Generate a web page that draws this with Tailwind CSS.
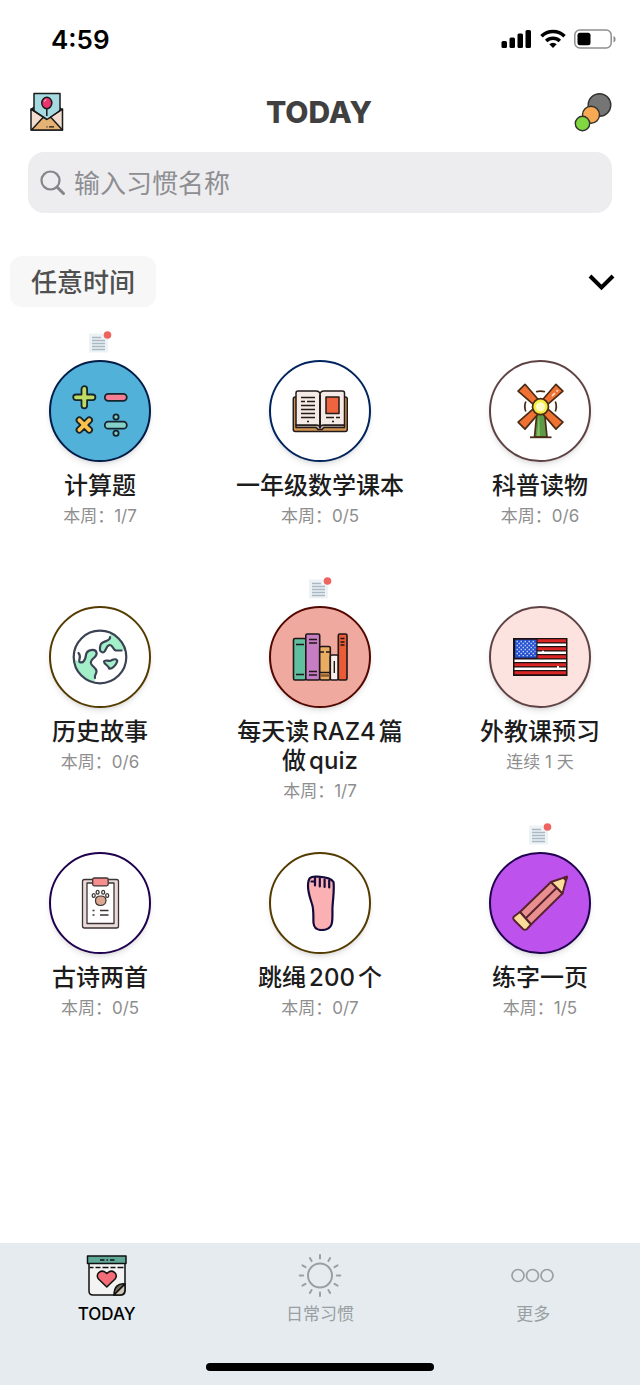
<!DOCTYPE html>
<html lang="zh-CN">
<head>
  <meta charset="UTF-8" />
  <meta name="viewport" content="width=device-width, initial-scale=1.0"/>
  <title>TODAY</title>
  <script src="https://cdn.jsdelivr.net/npm/@tailwindcss/browser@4"></script>
</head>
<body class="min-h-screen flex flex-col bg-white text-[#1c1c1c] font-['Inter','Noto_Sans_CJK_SC',sans-serif] [text-autospace:normal]">

  <!-- Status bar -->
  <div class="h-[78px] flex items-center justify-between pl-[51px] pr-6 text-black">
    <span class="text-[26px] font-semibold">4:59</span>
    <div class="flex items-center gap-2">
      <svg class="w-[31px] h-5" viewBox="0 0 31 20">
        <rect x="0.5" y="12" width="5.5" height="7" rx="1.5"/>
        <rect x="8.5" y="8.5" width="5.5" height="10.5" rx="1.5"/>
        <rect x="16.5" y="4.5" width="5.5" height="14.5" rx="1.5"/>
        <rect x="24.5" y="1" width="5.5" height="18" rx="1.5"/>
      </svg>
      <svg class="w-[26px] h-5" viewBox="0 0 26 20" fill="none" stroke="#000" stroke-width="3.6">
        <path d="M1.500 7.200a16.500 16.500 0 0 1 23 0"/>
        <path d="M6.200 12a9.800 9.800 0 0 1 13.600 0"/>
        <path d="M9.300 15.200a5.300 5.300 0 0 1 7.400 0L13 19z" fill="#000" stroke="none"/>
      </svg>
      <svg class="w-[42px] h-5" viewBox="0 0 42 20">
        <rect x=".8" y="1" width="36.4" height="18" rx="5" fill="none" stroke="#8e8e8e" stroke-width="1.5"/>
        <rect x="3.5" y="3.8" width="13" height="12.5" rx="2.5"/>
        <path d="M39.500 7v6.500c2-.8 2-2 2-3.200S41.500 7.800 39.500 7z" fill="#8e8e8e"/>
      </svg>
    </div>
  </div>

  <!-- Header -->
  <header class="h-[68px] flex items-center justify-between px-7">
    <button type="button" aria-label="信件">
      <svg class="w-9 h-10" viewBox="0 0 36 40" stroke="#1b1b1b" stroke-width="1.5" stroke-linejoin="round">
        <path d="M3 18l3-3v5zM34 18l-3-3v5z" fill="#e9c8b2"/>
        <path d="M6 1.500h26v24H6z" fill="#a5dbe0"/>
        <path d="M3 17l16 10L34.500 17v21H3z" fill="#f2dccd"/>
        <path d="M3.500 38L15 25.500h8L34.500 38z" fill="#e6b274"/>
        <path d="M7 18.500l12 8.500 12-8.500z" fill="#a5dbe0" stroke="none"/>
        <path d="M3 17l16 10.500L34.500 17" fill="none"/>
        <path d="M18.800 17v7" fill="none"/>
        <ellipse cx="18.800" cy="11" rx="5" ry="5.700" fill="#e9346c"/>
        <path d="M16.500 9.500l1.500-2" stroke="#fff" stroke-width="1"/>
        <path d="M18.500 34.800h1M21 34.800h5" stroke-width="1.3"/>
      </svg>
    </button>
    <h1 class="text-[30px] font-extrabold text-[#404040]">TODAY</h1>
    <button type="button" aria-label="进度">
      <svg class="w-[38px] h-10" viewBox="0 0 38 40" stroke="#33302d" stroke-width="1.4">
        <circle cx="25.500" cy="13" r="11.300" fill="#757575"/>
        <circle cx="17" cy="22.800" r="8.500" fill="#f8a953"/>
        <circle cx="8.500" cy="31.500" r="7.200" fill="#80d742"/>
      </svg>
    </button>
  </header>

  <!-- Search -->
  <div class="px-7 mt-1.5">
    <label class="h-[61px] flex items-center gap-2 px-3 rounded-2xl bg-[#ededef]">
      <svg class="w-[26px] h-[26px] shrink-0" viewBox="0 0 26 26" fill="none" stroke="#858589" stroke-linecap="round">
        <circle cx="10.500" cy="10.500" r="9" stroke-width="2.200"/>
        <path d="M17.200 17.200l6.300 6.300" stroke-width="3"/>
      </svg>
      <input type="search" aria-label="输入习惯名称" placeholder="输入习惯名称" class="flex-1 min-w-0 pt-0.5 bg-transparent outline-none text-[26px] placeholder:text-[#8e8e92]"/>
    </label>
  </div>

  <main class="flex-1 mt-[43px]">
    <div class="flex items-center justify-between pl-2.5 pr-[25px]">
      <h2 class="h-[51px] flex items-center px-[21px] pt-0.5 rounded-xl bg-[#f7f7f7] text-[26px] font-medium text-[#505050]">任意时间</h2>
      <button type="button" aria-label="展开">
        <svg class="w-7 h-5" viewBox="0 0 28 20" fill="none" stroke="#000" stroke-width="4"><path d="M3 4l11.500 11.500L26 4"/></svg>
      </button>
    </div>

    <!-- Habits -->
    <ul class="mt-[23px] grid grid-cols-3 auto-rows-fr gap-x-5 gap-y-[19px] text-center">
      <li class="flex flex-col items-center">
        <div class="h-[30px]">
          <svg class="w-6 h-6" viewBox="0 0 24 24"><rect x="1" y="3.500" width="19" height="19" fill="#edf2f5"/><path d="M4 7.500h9M4 10.500h13M4 13.500h13M4 16.500h13M4 19.500h13" stroke="#a9b9c3" stroke-width="1.400"/><circle cx="19.500" cy="5" r="3.800" fill="#ee6560"/></svg>
        </div>
        <button type="button" aria-label="计算题" class="size-[102px] rounded-full border-2 border-[#001c47] bg-[#52b1d9] shadow-md flex items-center justify-center">
          <svg class="size-14" viewBox="0 0 56 56" stroke="#16242c" stroke-width="1.800" stroke-linejoin="round">
            <path d="M9.500 6a2.800 2.800 0 0 1 5.600 0v5.500h5.500a2.800 2.800 0 0 1 0 5.600h-5.500v5.500a2.800 2.800 0 0 1-5.600 0v-5.500H4a2.800 2.800 0 0 1 0-5.600h5.500z" fill="#bfdc62"/>
            <rect x="32.800" y="10.800" width="22" height="7" rx="3.500" fill="#f47f94"/>
            <path d="M9.500 35a2.800 2.800 0 0 1 5.600 0v4.200h4.200a2.800 2.800 0 0 1 0 5.600h-4.200V49a2.800 2.800 0 0 1-5.600 0v-4.200H5.300a2.800 2.800 0 0 1 0-5.600h4.200z" fill="#fbc04b" transform="rotate(45 12.300 42)"/>
            <rect x="32.800" y="38.700" width="22" height="7" rx="3.500" fill="#86d0cb"/>
            <circle cx="44" cy="34" r="2.600" fill="#86d0cb"/>
            <circle cx="44" cy="50.300" r="2.600" fill="#86d0cb"/>
          </svg>
        </button>
        <h3 class="mt-[9px] text-2xl/[29px] font-medium">计算题</h3>
        <p class="mt-1 text-[17px]/6 text-[#8e8e8e]">本周：1/7</p>
      </li>

      <li class="flex flex-col items-center">
        <div class="h-[30px]"></div>
        <button type="button" aria-label="一年级数学课本" class="size-[102px] rounded-full border-2 border-[#00245e] bg-white shadow-md flex items-center justify-center">
          <svg class="size-14" viewBox="0 0 56 56" fill="none" stroke="#221b1a" stroke-width="1.500" stroke-linejoin="round">
            <rect x="1.300" y="14" width="54" height="34.500" rx="2" fill="#d39450"/>
            <path d="M4 42h48.500v2.500H32l-2 2h-4l-2-2H4z" fill="#bcaea8"/>
            <path d="M4 10q0-2 2-2h18q4 0 4 4 0-4 4-4h18.500q2 0 2 2v32H32q-4 0-4 3 0-3-4-3H4z" fill="#f5eae5"/>
            <path d="M28 12v33" stroke-width="2"/>
            <path d="M9 14.500h14M9 18.500h4M15 18.500h8M9 22.500h14M9 26.500h14M9 30.500h14M9 34.500h14M34 34.500h8M44 34.500h4M15 38.500h2M40 38.500h2" stroke-width="1.400"/>
            <rect x="34" y="14" width="13" height="16.500" fill="#ee643f"/>
          </svg>
        </button>
        <h3 class="mt-[9px] text-2xl/[29px] font-medium">一年级数学课本</h3>
        <p class="mt-1 text-[17px]/6 text-[#8e8e8e]">本周：0/5</p>
      </li>

      <li class="flex flex-col items-center">
        <div class="h-[30px]"></div>
        <button type="button" aria-label="科普读物" class="size-[102px] rounded-full border-2 border-[#5f4243] bg-white shadow-md flex items-center justify-center">
          <svg class="size-14" viewBox="0 0 56 56" stroke="#4a2c16" stroke-width="1.700" stroke-linejoin="round">
            <path d="M25 29h7.500l2.500 25H22.500z" fill="#5c9a45"/>
            <path d="M27 30l-2 23h3z" fill="#86bd65" stroke="none"/>
            <path d="M18 54.300h21.500" stroke-width="1.800"/>
            <g fill="#ef7233">
              <path d="M25 17L23.600-3.100h9.800L32 17z" transform="rotate(45 28.500 23.700)"/>
              <path d="M25 17L23.600-3.100h9.800L32 17z" transform="rotate(135 28.500 23.700)"/>
              <path d="M25 17L23.600-3.100h9.800L32 17z" transform="rotate(225 28.500 23.700)"/>
              <path d="M25 17L23.600-3.100h9.800L32 17z" transform="rotate(315 28.500 23.700)"/>
            </g>
            <path d="M40 13l3-3M44.500 8.500l1.500-1.500" stroke="#ffe1c6"/>
            <path d="M24 8.800q4.500-1.400 9 0M13.800 18.500q-2 5 0 10M43.300 18.500q2 5 0 10" fill="none"/>
            <circle cx="28.500" cy="23.700" r="8" fill="#f5ee45"/>
            <circle cx="28.500" cy="23.700" r="4.500" fill="#fffbc9" stroke="none"/>
          </svg>
        </button>
        <h3 class="mt-[9px] text-2xl/[29px] font-medium">科普读物</h3>
        <p class="mt-1 text-[17px]/6 text-[#8e8e8e]">本周：0/6</p>
      </li>

      <li class="flex flex-col items-center">
        <div class="h-[30px]"></div>
        <button type="button" aria-label="历史故事" class="size-[102px] rounded-full border-2 border-[#543b00] bg-white shadow-md flex items-center justify-center">
          <svg class="size-14" viewBox="0 0 56 56" fill="none" stroke="#3b4254" stroke-width="2.200" stroke-linecap="round" stroke-linejoin="round">
            <path d="M1.700 30L7.500 33c4 2 6-3 6.500-7 .5-5 9-7 10.500-2.500 1.500 5-7 6-5.500 11 1 3 5 4 5.500 7.500.3 3-2.500 4-1.500 7l-.5 4.500A26.300 26.300 0 0 1 1.700 30z" fill="#a3efc9" stroke="none"/>
            <path d="M38 3.700V8c1 5-8 3-9.500 8-1 4-1 7 2 7.500 4 0 3-7 7-7.500 4 0 3 5 6.500 5.500h9.300A26.300 26.300 0 0 0 38 3.700z" fill="#a3efc9" stroke="none"/>
            <path d="M32 32.500c1-2.500 5 .5 7.500-1.200 4-2 6.500-.8 5.500 1.700-1 3-5 7.500-8 6.500 0-3-5-4-5-7z" fill="#a3efc9"/>
            <path d="M6.500 24C10 28 6 31 7.500 33c4 2 6-3 6.500-7 .5-5 9-7 10.500-2.500 1.500 5-7 6-5.500 11 1 3 5 4 5.500 7.500.3 3-2.500 4-1.500 7"/>
            <path d="M38 8c1 5-8 3-9.500 8-1 4-1 7 2 7.500 4 0 3-7 7-7.500 4 0 3 5 6.500 5.500h5.500"/>
            <circle cx="28" cy="28" r="26.300"/>
          </svg>
        </button>
        <h3 class="mt-[9px] text-2xl/[29px] font-medium">历史故事</h3>
        <p class="mt-1 text-[17px]/6 text-[#8e8e8e]">本周：0/6</p>
      </li>

      <li class="flex flex-col items-center">
        <div class="h-[30px]">
          <svg class="w-6 h-6" viewBox="0 0 24 24"><rect x="1" y="3.500" width="19" height="19" fill="#edf2f5"/><path d="M4 7.500h9M4 10.500h13M4 13.500h13M4 16.500h13M4 19.500h13" stroke="#a9b9c3" stroke-width="1.400"/><circle cx="19.500" cy="5" r="3.800" fill="#ee6560"/></svg>
        </div>
        <button type="button" aria-label="每天读RAZ4篇做quiz" class="size-[102px] rounded-full border-2 border-[#520800] bg-[#f0a99f] shadow-md flex items-center justify-center">
          <svg class="size-14" viewBox="0 0 56 56" stroke="#1d1716" stroke-width="1.600">
            <rect x="1.500" y="9.500" width="12.300" height="41.500" rx="1.500" fill="#5fbf9f"/>
            <rect x="13.800" y="5" width="13.900" height="46" rx="1.500" fill="#c77dc3"/>
            <rect x="27.700" y="17.500" width="10.600" height="33.500" rx="1.500" fill="#e9ac63"/>
            <rect x="38.300" y="26" width="8" height="25" rx="1.500" fill="#f8efed"/>
            <rect x="46.300" y="5" width="8.700" height="46" rx="1.500" fill="#ea5c35"/>
            <path d="M4 15.500h8M4 45.500h8M17 10.500h8M17 14h8M17 42.500h8M17 46h8M28 23h4M34 23h4M28 43.500h10M42.300 32v12M48.500 9.500h4M48.500 13h4M48.500 16h4" fill="none" stroke-width="1.400"/>
            <path d="M28.500 46.500h9" stroke="#8b5a2d" stroke-width="2.500"/>
          </svg>
        </button>
        <h3 class="mt-[9px] text-2xl/[29px] font-medium">每天读RAZ4篇<br/>做quiz</h3>
        <p class="mt-1 text-[17px]/6 text-[#8e8e8e]">本周：1/7</p>
      </li>

      <li class="flex flex-col items-center">
        <div class="h-[30px]"></div>
        <button type="button" aria-label="外教课预习" class="size-[102px] rounded-full border-2 border-[#5f4243] bg-[#fde3e0] shadow-md flex items-center justify-center">
          <svg class="size-14" viewBox="0 0 56 56">
            <rect x="1" y="9" width="54.500" height="38" fill="#1a1010"/>
            <path d="M2.500 11.800h51.500M2.500 19.800h51.500M2.500 27.800h51.500M2.500 35.800h51.500M2.500 43.800h51.500" stroke="#dc2626" stroke-width="3"/>
            <path d="M2.500 15.800h51.500M2.500 23.800h51.500M2.500 31.800h51.500M2.500 39.800h51.500" stroke="#fff" stroke-width="2.600"/>
            <rect x="2.500" y="10.200" width="22.500" height="19" fill="#2450cf" stroke="#1a1010" stroke-width="1"/>
            <g stroke="#b9cbfa" stroke-width="1.300" stroke-dasharray="1.500 2.500">
              <path d="M4.500 12.500h19M4.500 16.500h19M4.500 20.500h19M4.500 24.500h19"/>
              <path d="M6.500 14.500h17M6.500 18.500h17M6.500 22.500h17M6.500 26.700h17"/>
            </g>
            <path d="M30 22.800h2M45 38h2" stroke="#fff" stroke-width="2"/>
          </svg>
        </button>
        <h3 class="mt-[9px] text-2xl/[29px] font-medium">外教课预习</h3>
        <p class="mt-1 text-[17px]/6 text-[#8e8e8e]">连续 1 天</p>
      </li>

      <li class="flex flex-col items-center">
        <div class="h-[30px]"></div>
        <button type="button" aria-label="古诗两首" class="size-[102px] rounded-full border-2 border-[#1e004e] bg-white shadow-md flex items-center justify-center">
          <svg class="size-14" viewBox="0 0 56 56" stroke="#3c3434" stroke-width="1.300" stroke-linejoin="round">
            <rect x="10.500" y="4.500" width="36" height="48.500" rx="2" fill="#eadcda"/>
            <path d="M20.500 8H15v40.500h27V8h-5.500" fill="#fff"/>
            <rect x="20.700" y="3" width="15.500" height="7.800" rx="1.500" fill="#f78f8f"/>
            <path d="M23.500 25.500c0-3 2.300-4.500 5.100-4.500s5.400 1.500 5.400 4.500-2.400 5-5.400 5-5.100-2-5.100-5z" fill="#dba991" stroke-width="1.200"/>
            <g fill="#fff"><ellipse cx="21.700" cy="20.500" rx="1.500" ry="1.900"/><ellipse cx="25.600" cy="17.300" rx="1.500" ry="1.900"/><ellipse cx="31.200" cy="17.300" rx="1.500" ry="1.900"/><ellipse cx="35.200" cy="20.500" rx="1.500" ry="1.900"/></g>
            <path d="M20.500 35.500h2M20.500 40h2M28 35.500h8.500M28 40h8.500"/>
          </svg>
        </button>
        <h3 class="mt-[9px] text-2xl/[29px] font-medium">古诗两首</h3>
        <p class="mt-1 text-[17px]/6 text-[#8e8e8e]">本周：0/5</p>
      </li>

      <li class="flex flex-col items-center">
        <div class="h-[30px]"></div>
        <button type="button" aria-label="跳绳200个" class="size-[102px] rounded-full border-2 border-[#543b00] bg-white shadow-md flex items-center justify-center">
          <svg class="size-14" viewBox="0 0 56 56" stroke="#140a3c" stroke-width="2.200" stroke-linecap="round" stroke-linejoin="round">
            <path d="M18 3c2-2 5-1.500 8-1.300 5 .3 13 1.300 15.500 5.300 1 8-.5 16-1 25-.3 6 .5 13-1 17.500C38 54 33 55 29.500 55c-5 0-7.500-2.500-8-7-.4-7 .5-13-1.500-19-1.500-5-4-11-4-18 0-3 .3-6 2-8z" fill="#fbb1b3"/>
            <path d="M23 3v7.500M27.800 3.500v8M32.600 4.500V12M37.200 5.500v7M19.500 6.500H22" fill="none"/>
          </svg>
        </button>
        <h3 class="mt-[9px] text-2xl/[29px] font-medium">跳绳200个</h3>
        <p class="mt-1 text-[17px]/6 text-[#8e8e8e]">本周：0/7</p>
      </li>

      <li class="flex flex-col items-center">
        <div class="h-[30px]">
          <svg class="w-6 h-6" viewBox="0 0 24 24"><rect x="1" y="3.500" width="19" height="19" fill="#edf2f5"/><path d="M4 7.500h9M4 10.500h13M4 13.500h13M4 16.500h13M4 19.500h13" stroke="#a9b9c3" stroke-width="1.400"/><circle cx="19.500" cy="5" r="3.800" fill="#ee6560"/></svg>
        </div>
        <button type="button" aria-label="练字一页" class="size-[102px] rounded-full border-2 border-[#1e004e] bg-[#bd53ec] shadow-md flex items-center justify-center">
          <svg class="size-14" viewBox="0 0 56 56" stroke="#56232c" stroke-width="1.900" stroke-linejoin="round">
            <path d="M8 37L39 7l11.500 11.500L19 49.500z" fill="#e98f90"/>
            <path d="M39 7l16-5.300-4.500 16.800z" fill="#fcdc9a"/>
            <path d="M51.500 2.900L55 1.700l-1 3.800z" fill="#56232c"/>
            <path d="M8 37L19 49.500l-4 4.500q-2 1.500-4 0L2 45q-1.500-2 0-3.500z" fill="#fcdc9a"/>
            <path d="M13.500 43.500L44.500 13" fill="none"/>
          </svg>
        </button>
        <h3 class="mt-[9px] text-2xl/[29px] font-medium">练字一页</h3>
        <p class="mt-1 text-[17px]/6 text-[#8e8e8e]">本周：1/5</p>
      </li>
    </ul>
  </main>

  <!-- Tab bar -->
  <footer class="bg-[#e5ebee] pt-2 pb-3.5">
    <nav class="grid grid-cols-3 text-[17px]/6 text-[#999fa2]">
      <a href="#today" class="flex flex-col items-center gap-[3px] text-black font-medium">
        <svg class="size-12" viewBox="0 0 48 48" stroke="#111" stroke-width="1.500" stroke-linejoin="round">
          <path d="M6 12h36v28q0 4-4 4H10q-4 0-4-4z" fill="#f3f3f3"/>
          <path d="M4.500 5H43v7.500H4.500z" fill="#5fa897"/>
          <path d="M17 9h4.500M23.500 9H25M27 9h4.500M6.500 16.500h4M12.500 16.500h5M19.500 16.500h6M27.500 16.500h5M34.500 16.500h6" fill="none"/>
          <path d="M23.800 36L15.500 28c-4-5 3-11 8.300-5.500 5.300-5.500 12.300.5 8.300 5.500z" fill="#f26d78"/>
          <path d="M42 33c-7-1-11 3-11 11z" fill="#6e6a60"/>
          <path d="M42 33v6q-.5 5-5 5h-6z" fill="#cfc5b4"/>
        </svg>
        <span>TODAY</span>
      </a>
      <a href="#habits" class="flex flex-col items-center gap-[3px]">
        <svg class="size-12" viewBox="0 0 48 48" fill="none" stroke="#999fa2" stroke-width="2" stroke-linecap="round">
          <circle cx="24" cy="24.500" r="12"/>
          <path d="M24 4v3.500M24 41.500V45M3.700 24.500h3.500M40.800 24.500h3.500M13.900 7l1.700 3M32.400 39l1.700 3M34.100 7l-1.700 3M15.600 39l-1.700 3M6.500 14.400l3 1.700M38.500 32.900l3 1.700M41.500 14.400l-3 1.700M9.500 32.900l-3 1.700"/>
        </svg>
        <span>日常习惯</span>
      </a>
      <a href="#more" class="flex flex-col items-center gap-[3px]">
        <svg class="size-12" viewBox="0 0 48 48" fill="none" stroke="#999fa2" stroke-width="1.700">
          <circle cx="9" cy="24.500" r="6"/><circle cx="23.500" cy="24.500" r="6"/><circle cx="38" cy="24.500" r="6"/>
        </svg>
        <span>更多</span>
      </a>
    </nav>
    <div class="mt-[37px] mx-auto w-[228px] h-2 rounded-full bg-black"></div>
  </footer>

</body>
</html>
